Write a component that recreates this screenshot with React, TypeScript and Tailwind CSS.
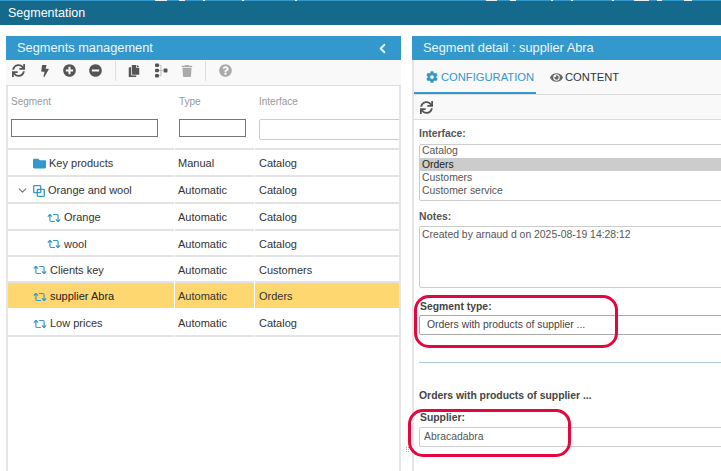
import { ChevronDown, ChevronLeft, Repeat2 } from "lucide-react";
import {
  FaBolt,
  FaCog,
  FaCopy,
  FaEye,
  FaFolder,
  FaMinusCircle,
  FaPlusCircle,
  FaQuestionCircle,
  FaSync,
  FaTrash,
} from "react-icons/fa";

type Row = {
  name: string;
  type: string;
  iface: string;
  icon: "folder" | "group" | "rule";
  indent: string;
  h: string;
  selected?: boolean;
  open?: boolean;
};

const rows: Row[] = [
  { name: "Key products", type: "Manual", iface: "Catalog", icon: "folder", indent: "pl-[25px]", h: "h-[27px]" },
  { name: "Orange and wool", type: "Automatic", iface: "Catalog", icon: "group", indent: "pl-[25px]", h: "h-[27px]", open: true },
  { name: "Orange", type: "Automatic", iface: "Catalog", icon: "rule", indent: "pl-[39px]", h: "h-[27px]" },
  { name: "wool", type: "Automatic", iface: "Catalog", icon: "rule", indent: "pl-[39px]", h: "h-[26px]" },
  { name: "Clients key", type: "Automatic", iface: "Customers", icon: "rule", indent: "pl-[25px]", h: "h-[26px]" },
  { name: "supplier Abra", type: "Automatic", iface: "Orders", icon: "rule", indent: "pl-[25px]", h: "h-[27px]", selected: true },
  { name: "Low prices", type: "Automatic", iface: "Catalog", icon: "rule", indent: "pl-[25px]", h: "h-[27px]" },
];

// bottom edge of the app toolbar that is scrolled off above the title bar
const cutOffIcons = [
  "left-[155px] w-[12px]",
  "left-[179px] w-[6px]",
  "left-[203px] w-[2px]",
  "left-[242px] w-[2px]",
  "left-[295px] w-[2px]",
  "left-[486px] w-[11px]",
  "left-[510px] w-[6px]",
  "left-[551px] w-[2px]",
  "left-[571px] w-[2px]",
  "left-[612px] w-[2px]",
  "left-[634px] w-[15px]",
  "left-[657px] w-[5px]",
  "left-[684px] w-[8px]",
];

function GroupIcon() {
  return (
    <svg width="12" height="12" viewBox="0 0 12 12" fill="none" stroke="#3398cc" strokeWidth="1.3">
      <rect x="0.7" y="0.7" width="7" height="7" rx="0.8" />
      <rect x="4.3" y="4.3" width="7" height="7" rx="0.8" />
    </svg>
  );
}

function TreeIcon() {
  return (
    <svg width="13" height="15" viewBox="0 0 13 15" fill="#555">
      <rect x="0" y="0.5" width="4" height="3.6" rx="1" />
      <rect x="0" y="5.7" width="4" height="3.6" rx="1" />
      <rect x="0" y="10.9" width="4" height="3.6" rx="1" />
      <rect x="8.5" y="5.5" width="4" height="4" rx="1" />
      <path d="M4 2.3h2v10.4H4M4 7.5h5" fill="none" stroke="#bbb" strokeWidth="1" />
    </svg>
  );
}

function RowIcon({ icon }: { icon: Row["icon"] }) {
  if (icon === "folder") return <FaFolder className="w-[13px] text-[#3398cc]" size={13} />;
  if (icon === "group") return <GroupIcon />;
  return <Repeat2 className="text-[#3398cc]" size={14} strokeWidth={2} />;
}

function Divider() {
  return <div className="h-5 w-px bg-[#dddddd]" />;
}

export default function App() {
  return (
    <div className="relative h-[471px] w-[721px] overflow-hidden bg-white font-['Liberation_Sans',Arial,sans-serif] text-[11px] text-[#333333]">
      <div className="flex h-[25px] items-center border-t border-[#3398cc] bg-[#156a8b] pl-2 text-[12.5px] text-white">
        Segmentation
      </div>
      {cutOffIcons.map((c) => (
        <div key={c} className={`absolute top-0 h-px bg-[#e8eef2] ${c}`} />
      ))}

      <div className="mt-[11px] flex items-start pl-[6px]">
        {/* Left panel */}
        <div className="w-[395px] shrink-0">
          <div className="flex h-6 items-center justify-between bg-[#3398cc] pl-[11px] pr-[11px] text-[12.8px] text-[#eef7fc]">
            <span>Segments management</span>
            <ChevronLeft size={15} strokeWidth={3} />
          </div>
          <div className="flex h-[26px] items-center border-b border-[#dddddd] bg-[#f9f9f9] pb-[4px] pl-[6px]">
            <FaSync className="text-[#555555]" size={13} />
            <FaBolt className="ml-[14px] text-[#555555]" size={12} />
            <FaPlusCircle className="ml-[12px] text-[#555555]" size={13} />
            <FaMinusCircle className="ml-[13px] text-[#555555]" size={13} />
            <div className="ml-[13px]">
              <Divider />
            </div>
            <FaCopy className="ml-[12px] text-[#555555]" size={12} />
            <div className="ml-[15px]">
              <TreeIcon />
            </div>
            <FaTrash className="ml-[13px] text-[#aaaaaa]" size={12} />
            <div className="ml-[12px]">
              <Divider />
            </div>
            <FaQuestionCircle className="ml-[13px] text-[#aaaaaa]" size={13} />
          </div>

          <div className="h-[400px] border-x-2 border-[#e5e5e5] bg-white">
            <div className="flex h-[64px] gap-px text-[10px] text-[#999999]">
              <div className="w-[166px] shrink-0 border-b-2 border-[#e3e3e3] pl-[3px] pt-[8px]">
                <div>Segment</div>
                <div className="mt-[10px] h-[18px] w-[147px] border border-[#767676]" />
              </div>
              <div className="w-[79px] shrink-0 border-b-2 border-[#e3e3e3] pl-[4px] pt-[8px]">
                <div>Type</div>
                <div className="mt-[10px] h-[18px] w-[67px] border border-[#767676]" />
              </div>
              <div className="min-w-0 flex-1 overflow-hidden border-b-2 border-[#e3e3e3] pl-[4px] pt-[8px]">
                <div>Interface</div>
                <div className="mt-[10px] h-[21px] w-[200px] rounded-[2px] border border-[#cccccc]" />
              </div>
            </div>
            {rows.map((row) => {
              const cell = row.selected ? "border-white bg-[#ffd770]" : "border-[#e3e3e3]";
              return (
                <div key={row.name} className={`flex ${row.h} gap-px text-[11px]`}>
                  <div className={`relative flex w-[166px] shrink-0 items-center gap-[3px] border-b-2 pt-[2px] ${cell} ${row.indent}`}>
                    {row.open && <ChevronDown className="absolute left-[8px] text-[#777777]" size={13} />}
                    <RowIcon icon={row.icon} />
                    <span className={row.selected ? "text-[#222222]" : ""}>{row.name}</span>
                  </div>
                  <div className={`flex w-[79px] shrink-0 items-center border-b-2 pl-[3px] pt-[2px] ${cell}`}>{row.type}</div>
                  <div className={`flex flex-1 items-center border-b-2 pl-[4px] pt-[2px] ${cell}`}>{row.iface}</div>
                </div>
              );
            })}
          </div>
        </div>

        {/* Right panel */}
        <div className="ml-[11px] w-[340px] shrink-0">
          <div className="flex h-6 items-center bg-[#3398cc] pl-[11px] text-[12.8px] text-[#eef7fc]">
            Segment detail : supplier Abra
          </div>
          <div className="h-[412px] border-l-2 border-[#e5e5e5] bg-white">
            <div className="flex h-[35px] items-center gap-[16px] border-b border-[#dddddd] bg-[#f9f9f9] pl-[12px] pt-[1px] text-[11.2px]">
              <div className="flex items-center gap-[3px] text-[#3398cc]">
                <FaCog size={12} />
                CONFIGURATION
              </div>
              <div className="flex items-center gap-[2px] text-[#333333]">
                <FaEye className="text-[#666666]" size={13} />
                CONTENT
              </div>
            </div>
            <div className="-mt-[3px] mb-px h-[2px] w-[122px] bg-[#3398cc]" />
            <div className="flex h-[25px] items-center border-b border-[#dddddd] bg-[#f9f9f9] pl-[6px]">
              <FaSync className="text-[#555555]" size={13} />
            </div>

            <div className="pl-[5px] pt-[6px] text-[10.4px]">
              <div className="font-bold text-[#555555]">Interface:</div>
              <div className="mt-[2px] h-[57px] rounded-[2px] border border-[#cccccc] text-[#555555]">
                <div className="h-[13px] pl-[2px] leading-[12px]">Catalog</div>
                <div className="h-[13px] bg-[#cccccc] pl-[2px] leading-[13px] text-[#222222]">Orders</div>
                <div className="h-[13px] pl-[2px] leading-[13px]">Customers</div>
                <div className="h-[13px] pl-[2px] leading-[13px]">Customer service</div>
              </div>

              <div className="mt-[8px] font-bold text-[#555555]">Notes:</div>
              <div className="mt-[2px] h-[62px] rounded-[2px] border border-[#cccccc] pl-[2px] text-[#555555]">
                Created by arnaud d on 2025-08-19 14:28:12
              </div>

              <div className="mt-[11px] pl-px font-bold text-[#444444]">Segment type:</div>
              <div className="flex h-[20px] items-center rounded-[2px] border border-[#aaaaaa] pl-[7px] text-[#444444]">
                Orders with products of supplier ...
              </div>

              <div className="mt-[27px] border-t border-[#a9c6da]" />

              <div className="mt-[25px] font-bold text-[#444444]">Orders with products of supplier ...</div>
              <div className="mt-[7px] pl-px font-bold text-[#444444]">Supplier:</div>
              <div className="mt-px flex h-[20px] items-center rounded-[2px] border border-[#cccccc] pl-[4px] text-[#555555]">
                Abracadabra
              </div>
            </div>
          </div>
        </div>
      </div>

      {/* Splitter grip */}
      <div className="absolute left-[406px] top-[447px] grid grid-cols-2 gap-px">
        {[0, 1, 2, 3, 4, 5].map((i) => (
          <div key={i} className="h-px w-px bg-[#aaaaaa]" />
        ))}
      </div>

      {/* Red annotation boxes */}
      <div className="absolute left-[414px] top-[295px] h-[53px] w-[204px] rounded-[15px] border-[3px] border-[#e4063c]" />
      <div className="absolute left-[408px] top-[409px] h-[48px] w-[163px] rounded-[15px] border-[3px] border-[#e4063c]" />
    </div>
  );
}
